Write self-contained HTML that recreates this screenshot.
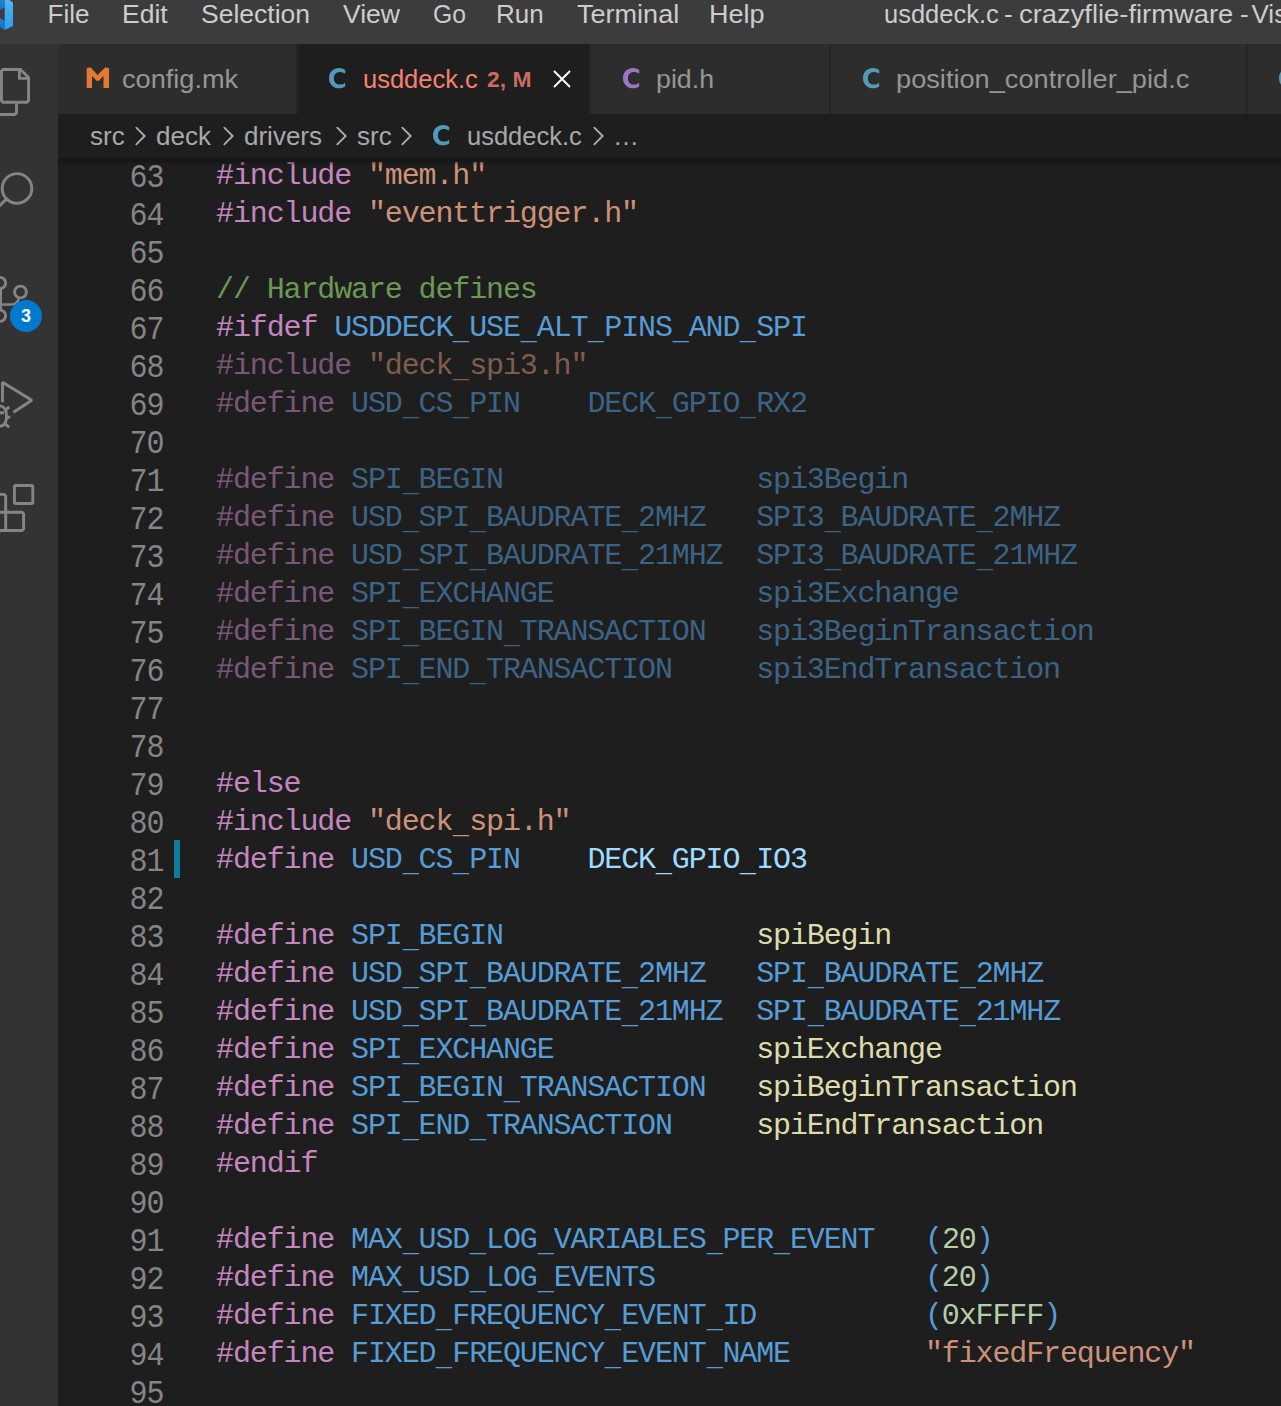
<!DOCTYPE html>
<html><head><meta charset="utf-8">
<style>
html,body{margin:0;padding:0;}
body{width:1281px;height:1406px;overflow:hidden;position:relative;background:#1e1e1e;font-family:"Liberation Sans",sans-serif;}
.abs{position:absolute;}
#title{left:0;top:0;width:1281px;height:44px;background:#3c3c3c;}
.menu{position:absolute;top:-8px;height:44px;line-height:44px;transform-origin:0 0;font-size:26px;color:#cccccc;white-space:pre;}
#act{left:0;top:44px;width:58px;height:1362px;background:#333333;}
#tabs{left:58px;top:44px;width:1223px;height:70px;background:#252526;}
.tab{position:absolute;top:0;height:70px;background:#2d2d2d;}
.tab.active{background:#1e1e1e;}
.tl{position:absolute;top:0;transform-origin:0 0;height:70px;line-height:70px;font-size:26px;white-space:pre;color:#969696;}
.ci{position:absolute;top:0;transform-origin:0 0;height:70px;line-height:70px;font-weight:bold;font-size:26px;white-space:pre;}
#bc{left:58px;top:114px;width:1223px;height:44px;background:#1e1e1e;}
.bt{position:absolute;top:0;transform-origin:0 0;height:44px;line-height:44px;font-size:26px;color:#a9a9a9;white-space:pre;}
#shadow{left:58px;top:158px;width:1223px;height:8px;background:linear-gradient(#141414,rgba(30,30,30,0));}
#ed{left:58px;top:158px;width:1223px;height:1248px;background:#1e1e1e;overflow:hidden;}
.ln{position:absolute;left:0;width:105.3px;text-align:right;height:38px;line-height:38px;font-family:"Liberation Mono",monospace;font-size:30px;letter-spacing:-1.125px;transform:scaleY(1.08);transform-origin:0 28px;color:#858585;white-space:pre;}
.ln.act{color:#858585}
.code{position:absolute;left:158px;height:38px;line-height:38px;font-family:"Liberation Mono",monospace;font-size:30px;letter-spacing:-1.125px;color:#d4d4d4;white-space:pre;}
.k{color:#c586c0}.s{color:#ce9178}.c{color:#6a9955}.m{color:#569cd6}.v{color:#9cdcfe}.f{color:#dcdcaa}.n{color:#b5cea8}
.dim{opacity:.55}
.u{font-style:normal;display:inline-block;position:relative;top:3px;transform:scaleX(0.9)}
</style></head><body>
<div id="title" class="abs">
  <svg class="abs" style="left:0;top:0" width="14" height="31" viewBox="0 0 14 31">
    <defs><linearGradient id="lg1" x1="0" y1="0" x2="0" y2="1"><stop offset="0" stop-color="#4fb3f5"/><stop offset="1" stop-color="#2b9ef0"/></linearGradient>
    <linearGradient id="lg2" x1="0" y1="0" x2="0" y2="1"><stop offset="0" stop-color="#2a80c0"/><stop offset="1" stop-color="#0a78d4"/></linearGradient></defs>
    <path d="M0 0 L4.7 0 L4.7 7 L0 10 Z" fill="url(#lg2)"/>
    <path d="M0 18 L4.7 21 L4.7 30 L0 27 Z" fill="url(#lg2)"/>
    <path d="M4.7 0 L9.5 0 L13 2.5 L13 26 L4.7 30 Z" fill="url(#lg1)"/>
  </svg>
  <span class="menu" style="left:47.5px">File</span>
  <span class="menu" style="left:121.5px;transform:scaleX(1.02)">Edit</span>
  <span class="menu" style="left:200.5px;transform:scaleX(1.02)">Selection</span>
  <span class="menu" style="left:343px;transform:scaleX(1.02)">View</span>
  <span class="menu" style="left:432.5px;transform:scaleX(0.95)">Go</span>
  <span class="menu" style="left:496px">Run</span>
  <span class="menu" style="left:577px;transform:scaleX(1.04)">Terminal</span>
  <span class="menu" style="left:709px;transform:scaleX(1.04)">Help</span>
  <span class="menu" style="left:884px;transform:scaleX(0.98)">usddeck.c</span>
  <span class="menu" style="left:1004px">-</span>
  <span class="menu" style="left:1019px;transform:scaleX(1.052)">crazyflie-firmware</span>
  <span class="menu" style="left:1240px">-</span>
  <span class="menu" style="left:1251.5px">Visual Studio Code</span>
</div>
<div id="act" class="abs">
<svg class="abs" style="left:0;top:-44px" width="58" height="600" viewBox="0 0 58 600">
<g fill="none" stroke="#858585" stroke-width="2.9" stroke-linejoin="miter">
  <!-- explorer -->
  <path d="M1.45 71 L3 69.45 L20.5 69.45 L28.55 77.5 L28.55 100.5 L26.8 102.3 L3 102.3 L1.45 100.7 Z"/>
  <path d="M19.4 69.45 V78.4 H28.55"/>
  <path d="M16.5 103 V112.8 L14.8 114.5 H-2"/>
  <!-- search -->
  <circle cx="17" cy="188.4" r="14.8"/>
  <path d="M7 198.4 L-3 208.4"/>
  <!-- source control -->
  <circle cx="0" cy="283" r="5.6"/>
  <path d="M0.6 289 V309"/>
  <circle cx="20.5" cy="292" r="5.9"/>
  <path d="M19 298 C18 302 15 304.5 11 304.5 H-1" stroke-width="2.6"/>
  <circle cx="0" cy="315.7" r="5.6"/>
  <!-- run debug -->
  <path d="M2.5 402.3 V382.2 L31.8 400.3 L13.5 412.3" stroke-linejoin="bevel"/>
  <path d="M-1 405.8 C4 405.8 6.5 410 6.5 416.5 C6.5 423 4 426.3 -1 426.3"/>
  <path d="M-1 412.7 H4 M5.2 410.3 L9.2 406.8 M6.2 417.3 H10.2 M5.2 423.8 L9.2 427.3"/>
  <!-- extensions -->
  <rect x="14.4" y="485.45" width="18.4" height="18" rx="1.2"/>
  <path d="M-3 494.4 H4.2 L5.7 495.9 V530.5 H-3 M-3 512.3 H22.1 L23.6 513.8 V529 L22.1 530.5 H5.7"/>
</g>
<circle cx="26" cy="316" r="16" fill="#007acc"/>
<text x="26" y="321.8" text-anchor="middle" font-family="Liberation Sans" font-weight="bold" font-size="18" fill="#ffffff">3</text>
</svg>

</div>
<div id="tabs" class="abs">
  <div class="tab" style="left:0;width:238px">
    <svg class="abs" style="left:0;top:0" width="60" height="70" viewBox="58 44 60 70"><path d="M86.7 88 L86.7 68.3 L90.4 67.3 L97.6 74.9 L105.4 67.3 L109 68.3 L109 88 L103.5 88 L103.5 76.1 L99 80.8 L96.5 80.8 L92 76.1 L92 88 Z" fill="#e37933"/></svg>
    <span class="tl" style="left:64px;transform:scaleX(1.044)">config.mk</span>
  </div>
  <div class="tab active" style="left:240px;width:291px">
    <span class="tl" style="left:65px;transform:scaleX(0.98);color:#f88070">usddeck.c</span>
    <span class="tl" style="left:189px;top:1px;transform:scaleX(1.04);color:#cc6c60;font-size:22px;font-weight:bold">2, M</span>
    <svg class="abs" style="left:254.6px;top:26px" width="18" height="18" viewBox="0 0 18 18"><path d="M1 1 L17 17 M17 1 L1 17" stroke="#ffffff" stroke-width="1.9"/></svg>
  </div>
  <div class="tab" style="left:533px;width:238px">
    <span class="tl" style="left:65px;transform:scaleX(1.03)">pid.h</span>
  </div>
  <div class="tab" style="left:773px;width:415px">
    <span class="tl" style="left:65px;transform:scaleX(1.046)">position_controller_pid.c</span>
  </div>
  <div class="tab" style="left:1190px;width:40px">
  </div>
</div>
<div id="bc" class="abs">
<span class="bt" style="left:32px">src</span>
<span class="bt" style="left:98px">deck</span>
<span class="bt" style="left:186px">drivers</span>
<span class="bt" style="left:299px">src</span>
<svg class="abs" style="left:76px;top:13px" width="14" height="20" viewBox="0 0 14 20" style="overflow:visible"><path d="M1.8 0.1 L10.7 9.0 L1.8 17.9" fill="none" stroke="#b0b0b0" stroke-width="1.8"/></svg>
<svg class="abs" style="left:164px;top:13px" width="14" height="20" viewBox="0 0 14 20" style="overflow:visible"><path d="M1.8 0.1 L10.7 9.0 L1.8 17.9" fill="none" stroke="#b0b0b0" stroke-width="1.8"/></svg>
<svg class="abs" style="left:277px;top:13px" width="14" height="20" viewBox="0 0 14 20" style="overflow:visible"><path d="M1.8 0.1 L10.7 9.0 L1.8 17.9" fill="none" stroke="#b0b0b0" stroke-width="1.8"/></svg>
<svg class="abs" style="left:342px;top:13px" width="14" height="20" viewBox="0 0 14 20" style="overflow:visible"><path d="M1.8 0.1 L10.7 9.0 L1.8 17.9" fill="none" stroke="#b0b0b0" stroke-width="1.8"/></svg>
<svg class="abs" style="left:534px;top:13px" width="14" height="20" viewBox="0 0 14 20" style="overflow:visible"><path d="M1.8 0.1 L10.7 9.0 L1.8 17.9" fill="none" stroke="#b0b0b0" stroke-width="1.8"/></svg>
<span class="bt" style="left:409px;transform:scaleX(0.98)">usddeck.c</span>
<span class="bt" style="left:555px">…</span>
</div>
<div id="ed" class="abs">
<div class="abs" style="left:116px;top:682px;width:6px;height:38px;background:#107c9e"></div>
<div class="ln" style="top:1.5px">63</div>
<div class="code" style="top:-1px"><span class="k">#include</span> <span class="s">&quot;mem.h&quot;</span></div>
<div class="ln" style="top:39.5px">64</div>
<div class="code" style="top:37px"><span class="k">#include</span> <span class="s">&quot;eventtrigger.h&quot;</span></div>
<div class="ln" style="top:77.5px">65</div>
<div class="ln" style="top:115.5px">66</div>
<div class="code" style="top:113px"><span class="c">// Hardware defines</span></div>
<div class="ln" style="top:153.5px">67</div>
<div class="code" style="top:151px"><span class="k">#ifdef</span> <span class="m">USDDECK<i class="u">_</i>USE<i class="u">_</i>ALT<i class="u">_</i>PINS<i class="u">_</i>AND<i class="u">_</i>SPI</span></div>
<div class="ln" style="top:191.5px">68</div>
<div class="code dim" style="top:189px"><span class="k">#include</span> <span class="s">&quot;deck<i class="u">_</i>spi3.h&quot;</span></div>
<div class="ln" style="top:229.5px">69</div>
<div class="code dim" style="top:227px"><span class="k">#define</span> <span class="m">USD<i class="u">_</i>CS<i class="u">_</i>PIN</span>    <span class="m">DECK<i class="u">_</i>GPIO<i class="u">_</i>RX2</span></div>
<div class="ln" style="top:267.5px">70</div>
<div class="ln" style="top:305.5px">71</div>
<div class="code dim" style="top:303px"><span class="k">#define</span> <span class="m">SPI<i class="u">_</i>BEGIN</span>               <span class="m">spi3Begin</span></div>
<div class="ln" style="top:343.5px">72</div>
<div class="code dim" style="top:341px"><span class="k">#define</span> <span class="m">USD<i class="u">_</i>SPI<i class="u">_</i>BAUDRATE<i class="u">_</i>2MHZ</span>   <span class="m">SPI3<i class="u">_</i>BAUDRATE<i class="u">_</i>2MHZ</span></div>
<div class="ln" style="top:381.5px">73</div>
<div class="code dim" style="top:379px"><span class="k">#define</span> <span class="m">USD<i class="u">_</i>SPI<i class="u">_</i>BAUDRATE<i class="u">_</i>21MHZ</span>  <span class="m">SPI3<i class="u">_</i>BAUDRATE<i class="u">_</i>21MHZ</span></div>
<div class="ln" style="top:419.5px">74</div>
<div class="code dim" style="top:417px"><span class="k">#define</span> <span class="m">SPI<i class="u">_</i>EXCHANGE</span>            <span class="m">spi3Exchange</span></div>
<div class="ln" style="top:457.5px">75</div>
<div class="code dim" style="top:455px"><span class="k">#define</span> <span class="m">SPI<i class="u">_</i>BEGIN<i class="u">_</i>TRANSACTION</span>   <span class="m">spi3BeginTransaction</span></div>
<div class="ln" style="top:495.5px">76</div>
<div class="code dim" style="top:493px"><span class="k">#define</span> <span class="m">SPI<i class="u">_</i>END<i class="u">_</i>TRANSACTION</span>     <span class="m">spi3EndTransaction</span></div>
<div class="ln" style="top:533.5px">77</div>
<div class="ln" style="top:571.5px">78</div>
<div class="ln" style="top:609.5px">79</div>
<div class="code" style="top:607px"><span class="k">#else</span></div>
<div class="ln" style="top:647.5px">80</div>
<div class="code" style="top:645px"><span class="k">#include</span> <span class="s">&quot;deck<i class="u">_</i>spi.h&quot;</span></div>
<div class="ln act" style="top:685.5px">81</div>
<div class="code" style="top:683px"><span class="k">#define</span> <span class="m">USD<i class="u">_</i>CS<i class="u">_</i>PIN</span>    <span class="v">DECK<i class="u">_</i>GPIO<i class="u">_</i>IO3</span></div>
<div class="ln" style="top:723.5px">82</div>
<div class="ln" style="top:761.5px">83</div>
<div class="code" style="top:759px"><span class="k">#define</span> <span class="m">SPI<i class="u">_</i>BEGIN</span>               <span class="f">spiBegin</span></div>
<div class="ln" style="top:799.5px">84</div>
<div class="code" style="top:797px"><span class="k">#define</span> <span class="m">USD<i class="u">_</i>SPI<i class="u">_</i>BAUDRATE<i class="u">_</i>2MHZ</span>   <span class="m">SPI<i class="u">_</i>BAUDRATE<i class="u">_</i>2MHZ</span></div>
<div class="ln" style="top:837.5px">85</div>
<div class="code" style="top:835px"><span class="k">#define</span> <span class="m">USD<i class="u">_</i>SPI<i class="u">_</i>BAUDRATE<i class="u">_</i>21MHZ</span>  <span class="m">SPI<i class="u">_</i>BAUDRATE<i class="u">_</i>21MHZ</span></div>
<div class="ln" style="top:875.5px">86</div>
<div class="code" style="top:873px"><span class="k">#define</span> <span class="m">SPI<i class="u">_</i>EXCHANGE</span>            <span class="f">spiExchange</span></div>
<div class="ln" style="top:913.5px">87</div>
<div class="code" style="top:911px"><span class="k">#define</span> <span class="m">SPI<i class="u">_</i>BEGIN<i class="u">_</i>TRANSACTION</span>   <span class="f">spiBeginTransaction</span></div>
<div class="ln" style="top:951.5px">88</div>
<div class="code" style="top:949px"><span class="k">#define</span> <span class="m">SPI<i class="u">_</i>END<i class="u">_</i>TRANSACTION</span>     <span class="f">spiEndTransaction</span></div>
<div class="ln" style="top:989.5px">89</div>
<div class="code" style="top:987px"><span class="k">#endif</span></div>
<div class="ln" style="top:1027.5px">90</div>
<div class="ln" style="top:1065.5px">91</div>
<div class="code" style="top:1063px"><span class="k">#define</span> <span class="m">MAX<i class="u">_</i>USD<i class="u">_</i>LOG<i class="u">_</i>VARIABLES<i class="u">_</i>PER<i class="u">_</i>EVENT</span>   <span class="m">(</span><span class="n">20</span><span class="m">)</span></div>
<div class="ln" style="top:1103.5px">92</div>
<div class="code" style="top:1101px"><span class="k">#define</span> <span class="m">MAX<i class="u">_</i>USD<i class="u">_</i>LOG<i class="u">_</i>EVENTS</span>                <span class="m">(</span><span class="n">20</span><span class="m">)</span></div>
<div class="ln" style="top:1141.5px">93</div>
<div class="code" style="top:1139px"><span class="k">#define</span> <span class="m">FIXED<i class="u">_</i>FREQUENCY<i class="u">_</i>EVENT<i class="u">_</i>ID</span>          <span class="m">(</span><span class="n">0xFFFF</span><span class="m">)</span></div>
<div class="ln" style="top:1179.5px">94</div>
<div class="code" style="top:1177px"><span class="k">#define</span> <span class="m">FIXED<i class="u">_</i>FREQUENCY<i class="u">_</i>EVENT<i class="u">_</i>NAME</span>        <span class="s">&quot;fixedFrequency&quot;</span></div>
<div class="ln" style="top:1217.5px">95</div>
</div>
<div id="shadow" class="abs"></div>
<svg class="abs" style="left:329.3px;top:68.2px;overflow:visible" width="17" height="21" viewBox="0 0 17 21"><path d="M16.2 2.1 C14.7 0.7 12.5 0 10.2 0 C4.3 0 0 4.2 0 10.15 C0 16.2 4.3 20.3 10.2 20.3 C12.5 20.3 14.7 19.7 16.2 18.5 L16.2 14.7 C14.9 15.9 13 16.6 11 16.6 C7.3 16.6 4.9 14.1 4.9 10.15 C4.9 6.3 7.3 3.9 11 3.9 C13 3.9 14.9 4.6 16.2 5.8 Z" fill="#519aba"/></svg>
<svg class="abs" style="left:622.9px;top:68.2px;overflow:visible" width="17" height="21" viewBox="0 0 17 21"><path d="M16.2 2.1 C14.7 0.7 12.5 0 10.2 0 C4.3 0 0 4.2 0 10.15 C0 16.2 4.3 20.3 10.2 20.3 C12.5 20.3 14.7 19.7 16.2 18.5 L16.2 14.7 C14.9 15.9 13 16.6 11 16.6 C7.3 16.6 4.9 14.1 4.9 10.15 C4.9 6.3 7.3 3.9 11 3.9 C13 3.9 14.9 4.6 16.2 5.8 Z" fill="#a074c4"/></svg>
<svg class="abs" style="left:862.9px;top:68.2px;overflow:visible" width="17" height="21" viewBox="0 0 17 21"><path d="M16.2 2.1 C14.7 0.7 12.5 0 10.2 0 C4.3 0 0 4.2 0 10.15 C0 16.2 4.3 20.3 10.2 20.3 C12.5 20.3 14.7 19.7 16.2 18.5 L16.2 14.7 C14.9 15.9 13 16.6 11 16.6 C7.3 16.6 4.9 14.1 4.9 10.15 C4.9 6.3 7.3 3.9 11 3.9 C13 3.9 14.9 4.6 16.2 5.8 Z" fill="#519aba"/></svg>
<svg class="abs" style="left:1278.9px;top:68.2px;overflow:visible" width="17" height="21" viewBox="0 0 17 21"><path d="M16.2 2.1 C14.7 0.7 12.5 0 10.2 0 C4.3 0 0 4.2 0 10.15 C0 16.2 4.3 20.3 10.2 20.3 C12.5 20.3 14.7 19.7 16.2 18.5 L16.2 14.7 C14.9 15.9 13 16.6 11 16.6 C7.3 16.6 4.9 14.1 4.9 10.15 C4.9 6.3 7.3 3.9 11 3.9 C13 3.9 14.9 4.6 16.2 5.8 Z" fill="#519aba"/></svg>
<svg class="abs" style="left:432.9px;top:125.4px;overflow:visible" width="17" height="21" viewBox="0 0 17 21"><path d="M16.2 2.1 C14.7 0.7 12.5 0 10.2 0 C4.3 0 0 4.2 0 10.15 C0 16.2 4.3 20.3 10.2 20.3 C12.5 20.3 14.7 19.7 16.2 18.5 L16.2 14.7 C14.9 15.9 13 16.6 11 16.6 C7.3 16.6 4.9 14.1 4.9 10.15 C4.9 6.3 7.3 3.9 11 3.9 C13 3.9 14.9 4.6 16.2 5.8 Z" fill="#519aba"/></svg>
</body></html>
